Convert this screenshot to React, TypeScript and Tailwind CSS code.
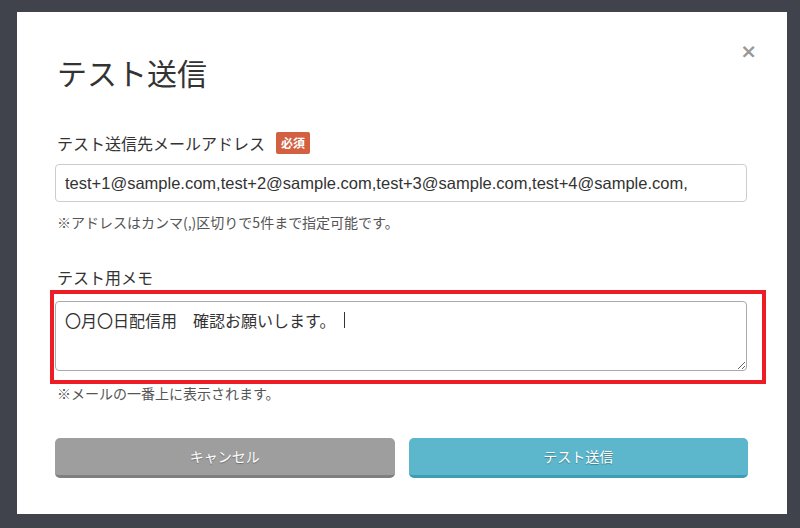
import { type FC } from "react";

const App: FC = () => {
  return (
    <main className="w-[800px] h-[528px] overflow-hidden bg-[#40424c] flex flex-col font-['Noto_Sans_CJK_JP',sans-serif]">
      {/* modal */}
      <div className="ml-[17px] mt-[12px] w-[770px] h-[502px] bg-white flex flex-col px-[38px] pt-[30px]">
        {/* header */}
        <div className="flex flex-row justify-between items-start">
          <h1 className="mt-[12px] ml-[2px] text-[30px] leading-[36px] text-[#333]">テスト送信</h1>
          <button className="-mr-[8px] mt-[-1px] text-[#999] text-[20px] leading-[20px] font-bold font-['DejaVu_Sans',sans-serif]">
            ×
          </button>
        </div>

        {/* address */}
        <div className="mt-[42px] flex flex-row items-center gap-[11px] ml-[2px]">
          <span className="text-[16px] leading-[22px] text-[#333]">テスト送信先メールアドレス</span>
          <span className="bg-[#d26041] text-white text-[12px] leading-[22px] font-bold px-[5px] rounded-[2px]">必須</span>
        </div>
        <input
          readOnly
          value="test+1@sample.com,test+2@sample.com,test+3@sample.com,test+4@sample.com,"
          className="mt-[10px] h-[38px] w-[692px] border border-[#ccc] rounded-[4px] px-[9px] text-[16.5px] text-[#333] outline-none font-['Liberation_Sans',sans-serif]"
        />
        <p className="mt-[10px] ml-[2px] text-[14px] leading-[20px] text-[#555]">※アドレスはカンマ(,)区切りで5件まで指定可能です。</p>

        {/* memo */}
        <p className="mt-[34px] ml-[2px] text-[16px] leading-[22px] text-[#333]">テスト用メモ</p>
        <div className="relative mt-[2px] -ml-[5px] w-[716px] border-[4px] border-[#ee1c25] pt-[7px] pb-[9px] pl-[1px]">
          <textarea
            readOnly
            value="〇月〇日配信用　確認お願いします。"
            className="block w-[692px] h-[70px] border border-[#a9a9a9] rounded-[4px] px-[9px] py-[7px] text-[16px] leading-[22px] text-[#333] outline-none resize-y"
          />
          {/* caret */}
          <span className="absolute left-[290px] top-[18px] w-px h-[16px] bg-[#333]" />
        </div>
        <p className="mt-[-1px] ml-[2px] text-[14px] leading-[20px] text-[#555]">※メールの一番上に表示されます。</p>

        {/* buttons */}
        <div className="mt-[35px] flex flex-row gap-[14px] w-[693px]">
          <button className="flex-1 h-[40px] rounded-[5px] bg-[#9e9e9e] border-b-[3px] border-[#7f7f7f] text-white text-[14px] [text-shadow:0_1px_1px_rgba(0,0,0,0.3)]">
            キャンセル
          </button>
          <button className="flex-1 h-[40px] rounded-[5px] bg-[#5cb6cc] border-b-[3px] border-[#3e9db2] text-white text-[14px] [text-shadow:0_1px_1px_rgba(0,0,0,0.3)]">
            テスト送信
          </button>
        </div>
      </div>
    </main>
  );
};

export default App;
